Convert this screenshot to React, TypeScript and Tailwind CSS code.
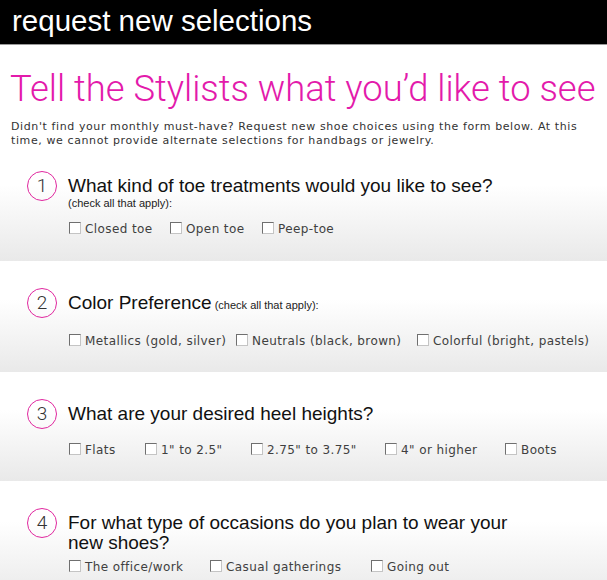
const pink = "border-[#e0289f]";

type Option = { label: string; w: string };

const sections: {
  n: number;
  title: string[];
  inlineNote?: boolean;
  note?: boolean;
  rowMt: string;
  pb: string;
  options: Option[];
}[] = [
  {
    n: 1,
    title: ["What kind of toe treatments would you like to see?"],
    note: true,
    rowMt: "mt-[12px]",
    pb: "pb-[25px]",
    options: [
      { label: "Closed toe", w: "w-[101px]" },
      { label: "Open toe", w: "w-[92px]" },
      { label: "Peep-toe", w: "w-[90px]" },
    ],
  },
  {
    n: 2,
    title: ["Color Preference"],
    inlineNote: true,
    rowMt: "mt-[19px]",
    pb: "pb-[24px]",
    options: [
      { label: "Metallics (gold, silver)", w: "w-[167px]" },
      { label: "Neutrals (black, brown)", w: "w-[181px]" },
      { label: "Colorful (bright, pastels)", w: "w-[180px]" },
    ],
  },
  {
    n: 3,
    title: ["What are your desired heel heights?"],
    rowMt: "mt-[19px]",
    pb: "pb-[24px]",
    options: [
      { label: "Flats", w: "w-[76px]" },
      { label: "1\" to 2.5\"", w: "w-[106px]" },
      { label: "2.75\" to 3.75\"", w: "w-[134px]" },
      { label: "4\" or higher", w: "w-[120px]" },
      { label: "Boots", w: "w-[70px]" },
    ],
  },
  {
    n: 4,
    title: ["For what type of occasions do you plan to wear your", "new shoes?"],
    rowMt: "mt-[7px]",
    pb: "pb-[24px]",
    options: [
      { label: "The office/work", w: "w-[141px]" },
      { label: "Casual gatherings", w: "w-[161px]" },
      { label: "Going out", w: "w-[100px]" },
    ],
  },
];

function Check({ label, w }: Option) {
  return (
    <label className={`flex items-center ${w} shrink-0`}>
      <input
        type="checkbox"
        className="appearance-none w-[12px] h-[12px] mt-[-2px] ml-[1px] mr-[4px] bg-white border border-[#6f6f6f] border-r-[#c4c4c4] border-b-[#c4c4c4] shrink-0"
      />
      <span className="text-[12px] leading-[14px] tracking-[0.4px] text-[#404040] whitespace-nowrap font-['DejaVu_Sans',sans-serif]">
        {label}
      </span>
    </label>
  );
}

function App() {
  return (
    <div className="w-[607px] h-[580px] overflow-hidden bg-white font-['Liberation_Sans',Arial,sans-serif]">
      <div className="h-[45px] bg-black border-b border-[#9a9a9a] pl-[12px] text-white text-[29.5px] leading-[42px]">
        request new selections
      </div>

      <h1 className="mt-[24px] pl-[10px] text-[#e31aab] text-[36.4px] leading-[40px] font-light whitespace-nowrap font-['Roboto',sans-serif]">
        Tell the Stylists what you’d like to see
      </h1>

      <p className="mt-[11px] pl-[11px] pr-[4px] text-[11px] leading-[14px] tracking-[0.6px] text-[#333] font-['DejaVu_Sans',sans-serif]">
        Didn't find your monthly must-have? Request new shoe choices using the
        form below. At this time, we cannot provide alternate selections for
        handbags or jewelry.
      </p>

      <div className="mt-[4px]">
        {sections.map((s) => (
          <div
            key={s.n}
            className={`mb-[8px] pt-[19px] ${s.pb} bg-linear-to-b from-white from-30% to-[#e9e9e9] flex gap-[11px] pl-[27px]`}
          >
            <div
              className={`w-[30px] h-[30px] rounded-full border ${pink} flex items-center justify-center text-[19px] font-light text-[#333] shrink-0 font-['Roboto',sans-serif]`}
            >
              {s.n}
            </div>
            <div className="pt-[5px]">
              {s.title.map((t, i) => (
                <div key={i} className="text-[19px] leading-[20px] text-[#111] whitespace-nowrap">
                  {t}
                  {s.inlineNote && (
                    <span className="text-[11px] text-[#222]"> (check all that apply):</span>
                  )}
                </div>
              ))}
              {s.note && (
                <div className="text-[11px] leading-[14px] text-[#222]">
                  (check all that apply):
                </div>
              )}
              <div className={`flex ${s.rowMt}`}>
                {s.options.map((o) => (
                  <Check key={o.label} {...o} />
                ))}
              </div>
            </div>
          </div>
        ))}
      </div>
    </div>
  );
}

export default App;
